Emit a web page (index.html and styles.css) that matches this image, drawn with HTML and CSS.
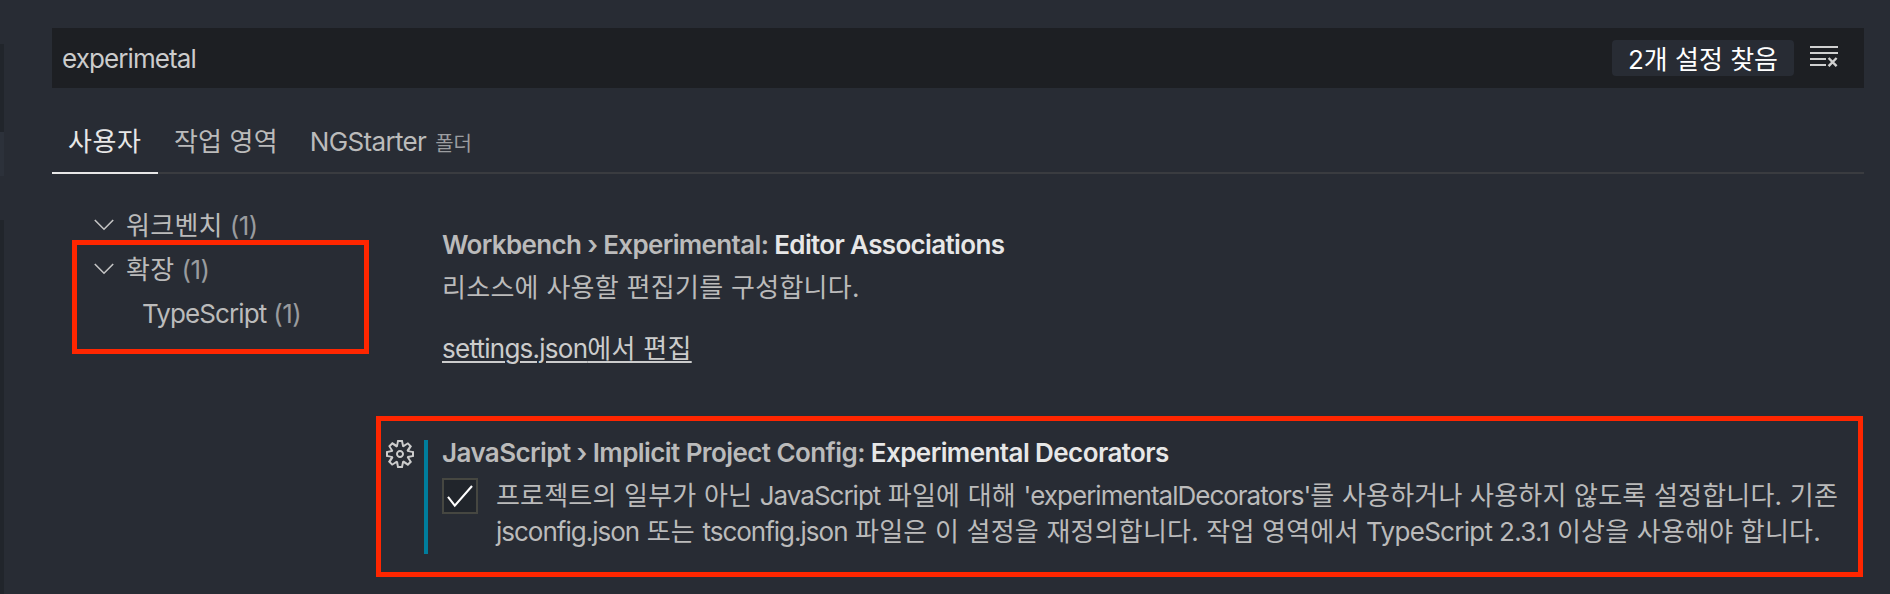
FILE: index.html
```html
<!DOCTYPE html>
<html lang="ko">
<head>
<meta charset="utf-8">
<title>설정</title>
<link rel="stylesheet" href="styles.css">
</head>
<body>
<div class="window">
  <aside class="edge">
    <div class="edge-dark edge-top"></div>
    <div class="edge-active"></div>
    <div class="edge-dark edge-rest"></div>
  </aside>
  <main class="editor">
    <header class="search">
      <span class="query latin">experimetal</span>
      <span class="count">2개 설정 찾음</span>
      <svg class="clear" width="28" height="22" viewBox="0 0 28 22" fill="none" stroke="#d0d0d0" stroke-width="2">
        <path d="M0 2H28M0 8H28M0 14H16M0 20H16"/>
        <path stroke-width="2.4" d="M18.6 13L26.6 21.2M26.6 13L18.6 21.2"/>
      </svg>
    </header>
    <nav class="tabs">
      <span class="tab active">사용자</span>
      <span class="tab">작업 영역</span>
      <span class="tab"><span class="folder">NGStarter</span><small>폴더</small></span>
    </nav>
    <div class="body">
      <ul class="toc">
        <li><svg class="chevron" width="20" height="12" viewBox="0 0 20 12"><path d="M.8 1L10 10.2L19.2 1"/></svg><span>워크벤치</span><i>(1)</i></li>
        <li><svg class="chevron" width="20" height="12" viewBox="0 0 20 12"><path d="M.8 1L10 10.2L19.2 1"/></svg><span>확장</span><i>(1)</i></li>
        <li class="child"><span class="latin">TypeScript</span><i>(1)</i></li>
      </ul>
      <section class="settings">
        <article class="setting first">
          <div class="content">
            <h2 class="title-a">Workbench › Experimental: <b>Editor Associations</b></h2>
            <p>리소스에 사용할 편집기를 구성합니다.</p>
            <a class="link"><span class="latin">settings.json</span>에서 편집</a>
          </div>
        </article>
        <article class="setting second">
          <svg class="gear" width="28" height="28" viewBox="1 1 14 14" fill="#cccccc">
            <path fill-rule="evenodd" d="M9.1 4.4L8.6 2H7.4l-.5 2.4-.7.3-2-1.3-.9.8 1.3 2-.2.7-2.4.5v1.2l2.4.5.3.8-1.3 2 .8.8 2-1.3.8.3.4 2.3h1.2l.5-2.4.8-.3 2 1.3.8-.8-1.3-2 .3-.8 2.3-.4V7.4l-2.4-.5-.3-.8 1.3-2-.8-.8-2 1.3-.7-.2zM9.4 1l.5 2.4L12 2.1l2 2-1.4 2.1 2.4.4v2.8l-2.4.5L14 12l-2 2-2.1-1.4-.5 2.4H6.6l-.5-2.4L4 13.9l-2-2 1.4-2.1L1 9.4V6.6l2.4-.5L2.1 4l2-2 2.1 1.3.4-2.3h2.8zm.6 7c0 1.1-.9 2-2 2s-2-.9-2-2 .9-2 2-2 2 .9 2 2zM8 9c.6 0 1-.4 1-1s-.4-1-1-1-1 .4-1 1 .4 1 1 1z"/>
          </svg>
          <div class="modified"></div>
          <div class="content">
            <h2 class="title-b">JavaScript › Implicit Project Config: <b>Experimental Decorators</b></h2>
            <div class="option">
              <span class="checkbox"><svg width="32" height="32" viewBox="0 0 32 32" fill="none" stroke="#fff" stroke-width="2.1"><path d="M4 16.8L10.8 25.6L28 6"/></svg></span>
              <p>프로젝트의 일부가 아닌 <span class="latin">JavaScript</span> 파일에 대해 <span class="latin">'experimentalDecorators'</span>를 사용하거나 사용하지 않도록 설정합니다. 기존<br><span class="latin">jsconfig.json</span> 또는 <span class="latin">tsconfig.json</span> 파일은 이 설정을 재정의합니다. 작업 영역에서 <span class="latin version">TypeScript 2.3.1</span> 이상을 사용해야 합니다.</p>
            </div>
          </div>
        </article>
      </section>
    </div>
  </main>
  <div class="mark mark-toc"></div>
  <div class="mark mark-setting"></div>
</div>
</body>
</html>
```
FILE: styles.css
```css
* { box-sizing: border-box; }
body {
  margin: 0;
  background: #282c34;
  color: #bbbbbb;
  font: 26px/36px Inter, "Noto Sans CJK KR", sans-serif;
  letter-spacing: 0.28px;
  overflow: hidden;
}
.latin { letter-spacing: -0.9px; }
.window { position: relative; display: flex; height: 594px; }
.edge { width: 4px; padding-top: 44px; flex: none; display: flex; flex-direction: column; }
.edge-dark { background: #21252b; }
.edge-top { height: 88px; }
.edge-active { height: 44px; background: #2c313a; }
.edge-rest { margin-top: 44px; flex: 1; }
.editor { width: 1860px; padding: 28px 0 0 48px; white-space: nowrap; }
.search {
  display: flex;
  align-items: center;
  height: 60px;
  padding: 0 26px 0 10px;
  background: #1d1f23;
  color: #cccccc;
}
.query { flex: 1; padding-top: 2px; }
.count {
  width: 182px;
  height: 36px;
  margin: 0 16px 0 0;
  padding-top: 2px;
  border-radius: 4px;
  background: #282c34;
  color: #fff;
  text-align: center;
  letter-spacing: 0;
}
.clear { margin-top: -4px; }
.tabs { display: flex; height: 86px; padding-top: 34px; border-bottom: 2px solid #3a3c40; }
.tab { height: 52px; padding: 2px 16px 0; }
.tab + .tab { letter-spacing: 0.15px; }
.tab .folder { display: inline-block; line-height: 34px; letter-spacing: -0.65px; }
.active { width: 106px; letter-spacing: 0.6px; color: #e7e7e7; border-bottom: 2px solid #e7e7e7; }
small { font-size: 20px; margin-left: 9px; letter-spacing: 0; color: #9b9da0; }
.body { display: flex; }
.toc { width: 324px; margin: 0; padding: 29px 0 0 42px; list-style: none; }
.toc li { display: flex; align-items: center; height: 44px; gap: 7px; }
.toc span, .toc i { padding-top: 1px; }
.toc .child { padding-left: 48px; }
.toc i { font-style: normal; letter-spacing: -0.5px; color: #999b9e; }
.chevron { margin-right: 5px; fill: none; stroke: #c5c5c5; stroke-width: 1.6; }
.settings { flex: 1; padding-top: 53px; }
.setting { display: flex; }
.first { height: 208px; padding-left: 66px; }
h2 { margin: 0; font-size: 26px; line-height: 36px; font-weight: 600; }
h2 b { color: #e7e7e7; font-weight: 600; }
.title-a { letter-spacing: -0.65px; }
.title-b { letter-spacing: -0.58px; }
p { margin: 0; }
.first p { margin: 7px 0 25px; }
.link { display: block; color: #cccccc; text-decoration: underline; text-decoration-thickness: 2px; text-underline-offset: 3px; }
.link .latin { letter-spacing: -0.75px; }
.second { padding-left: 10px; }
.gear { margin-top: 5px; flex: none; }
.modified { width: 4px; height: 114px; margin: 5px 14px 0 10px; background: #007d9c; flex: none; }
.option { display: flex; gap: 18px; margin-top: 6px; letter-spacing: 0.2px; }
.option p { padding-top: 1px; }
.option .latin { letter-spacing: -1px; }
.option .version { letter-spacing: -0.7px; }
.checkbox { width: 36px; height: 36px; margin-top: 1px; border: 2px solid #464741; background: #21252b; flex: none; }
.checkbox svg { display: block; }
.mark { position: absolute; border: 5px solid #ff2600; }
.mark-toc { left: 72px; top: 240px; width: 297px; height: 114px; }
.mark-setting { left: 376px; top: 416px; width: 1487px; height: 161px; }
```
